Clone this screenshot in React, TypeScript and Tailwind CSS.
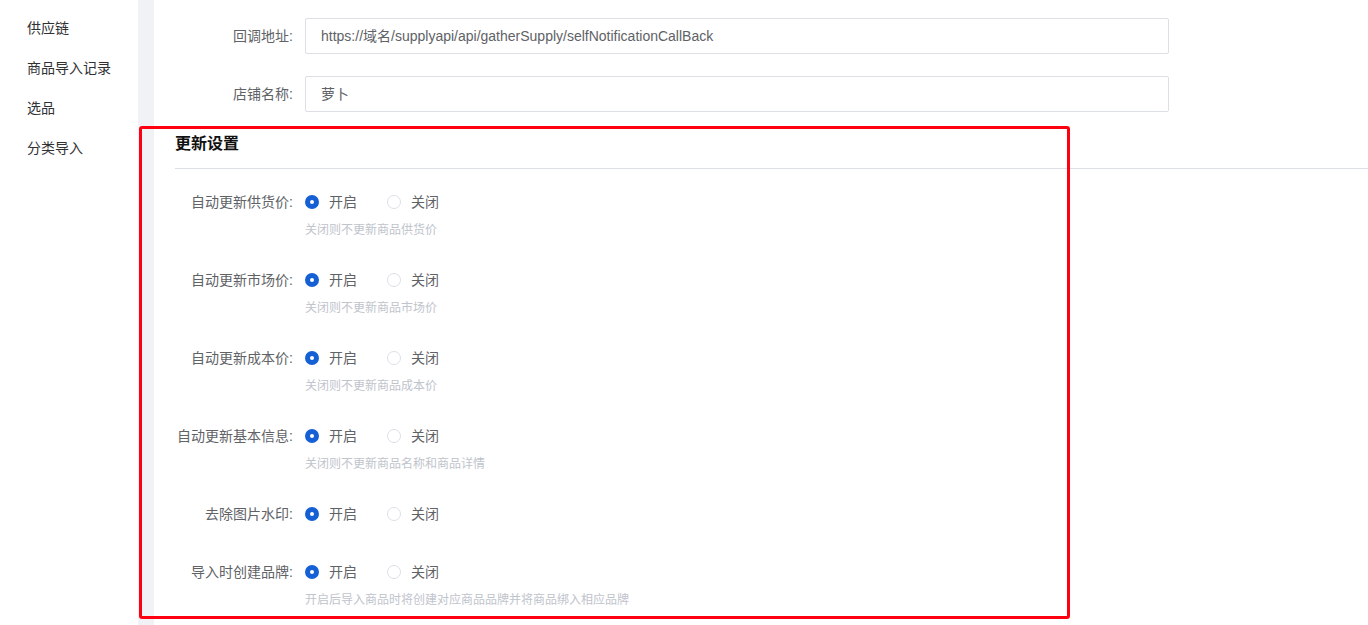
import React from "react";

const menu = ["供应链", "商品导入记录", "选品", "分类导入"];

const settings: { label: string; hint?: string }[] = [
  { label: "自动更新供货价:", hint: "关闭则不更新商品供货价" },
  { label: "自动更新市场价:", hint: "关闭则不更新商品市场价" },
  { label: "自动更新成本价:", hint: "关闭则不更新商品成本价" },
  { label: "自动更新基本信息:", hint: "关闭则不更新商品名称和商品详情" },
  { label: "去除图片水印:" },
  { label: "导入时创建品牌:", hint: "开启后导入商品时将创建对应商品品牌并将商品绑入相应品牌" },
];

function Radio({ checked, text }: { checked: boolean; text: string }) {
  return (
    <label className="flex items-center mr-[30px] cursor-pointer">
      {checked ? (
        <span className="w-[14px] h-[14px] rounded-full bg-[#1560d4] flex items-center justify-center">
          <span className="w-1 h-1 rounded-full bg-white" />
        </span>
      ) : (
        <span className="w-[14px] h-[14px] rounded-full border border-[#dcdfe6] bg-white" />
      )}
      <span className="ml-[10px] text-sm text-[#606266]">{text}</span>
    </label>
  );
}

export default function App() {
  return (
    <div
      className="relative flex h-[625px] w-[1368px] overflow-hidden bg-white"
      style={{ fontFamily: '"Liberation Sans", "Noto Sans CJK SC", sans-serif' }}
    >
      {/* sidebar */}
      <div className="w-[138px] shrink-0 bg-white pt-2">
        {menu.map((m) => (
          <div key={m} className="h-10 flex items-center pl-[27px] text-sm text-[#303133]">
            {m}
          </div>
        ))}
      </div>
      <div className="w-4 shrink-0 bg-[#f0f2f5]" />

      {/* main */}
      <div className="flex-1 bg-white pt-[18px]">
        <div className="flex items-center mb-[22px]">
          <div className="w-[151px] pr-3 text-right text-sm text-[#606266]">回调地址:</div>
          <div className="w-[864px] h-9 border border-[#dcdfe6] rounded-[2px] flex items-center pl-[15px] text-sm text-[#606266]">
            https://域名/supplyapi/api/gatherSupply/selfNotificationCallBack
          </div>
        </div>
        <div className="flex items-center">
          <div className="w-[151px] pr-3 text-right text-sm text-[#606266]">店铺名称:</div>
          <div className="w-[864px] h-9 border border-[#dcdfe6] rounded-[2px] flex items-center pl-[15px] text-sm text-[#606266]">
            萝卜
          </div>
        </div>

        <div className="ml-[21px] mt-5 pb-3 border-b border-[#dcdfe6]">
          <h3 className="text-base leading-6 font-bold text-[#111]">更新设置</h3>
        </div>

        <div className="pt-[13px]">
          {settings.map((s) => (
            <div key={s.label} className={s.hint ? "mb-[22px]" : "mb-[18px]"}>
              <div className="flex items-center h-10">
                <div className="w-[151px] pr-3 text-right text-sm text-[#606266]">{s.label}</div>
                <Radio checked text="开启" />
                <Radio checked={false} text="关闭" />
              </div>
              {s.hint && (
                <div className="ml-[151px] text-xs leading-4 text-[#c0c4cc]">{s.hint}</div>
              )}
            </div>
          ))}
        </div>
      </div>

      {/* annotation */}
      <div className="absolute left-[139px] top-[126px] w-[931px] h-[493px] border-[3px] border-[#ff0010] rounded-[3px] pointer-events-none" />
    </div>
  );
}
